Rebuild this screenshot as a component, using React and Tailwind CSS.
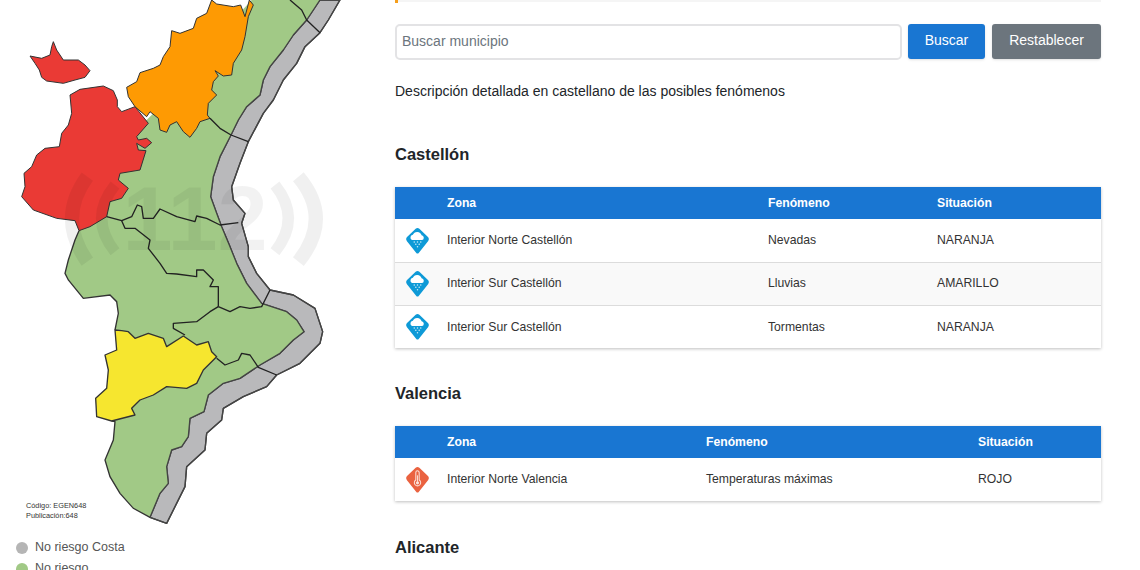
const land = "M755,0 L960,0 L940,30 L920,60 L880,105 L850,150 L810,200 L790,240 L780,285 L740,320 L715,360 L693,405 L660,470 L640,530 L632,590 L650,640 L665,680 L688,735 L710,790 L740,850 L785,910 L860,935 L890,960 L912,995 L880,1020 L840,1060 L780,1095 L720,1135 L670,1150 L625,1185 L612,1235 L570,1255 L565,1310 L545,1340 L515,1350 L500,1400 L505,1450 L480,1480 L450,1552 L400,1525 L360,1480 L330,1430 L315,1380 L340,1320 L345,1265 L290,1250 L287,1195 L320,1165 L325,1110 L315,1065 L350,1050 L345,990 L355,940 L350,905 L330,885 L250,895 L205,840 L195,820 L205,780 L225,720 L237,692 L280,600 L340,500 L390,400 L440,360 L500,300 L600,200 L700,60 Z";
const gray = "M960,0 L1020,0 L985,60 L960,98 L915,140 L890,190 L850,240 L820,300 L790,340 L745,425 L720,490 L695,560 L700,600 L735,640 L725,670 L745,740 L745,770 L770,820 L810,870 L880,885 L945,925 L968,995 L960,1030 L900,1090 L830,1125 L800,1160 L730,1190 L670,1225 L665,1260 L620,1300 L615,1350 L560,1400 L555,1460 L500,1570 L450,1552 L480,1480 L505,1450 L500,1400 L515,1350 L545,1340 L565,1310 L570,1255 L612,1235 L625,1185 L670,1150 L720,1135 L780,1095 L840,1060 L880,1020 L912,995 L890,960 L860,935 L785,910 L740,850 L710,790 L688,735 L665,680 L650,640 L632,590 L640,530 L660,470 L693,405 L715,360 L740,320 L780,285 L790,240 L810,200 L850,150 L880,105 L920,60 L940,30 Z";
const orange = "M635,0 L650,12 L700,20 L722,15 L735,50 L748,0 L760,15 L745,50 L735,110 L725,150 L700,190 L695,225 L670,228 L645,212 L655,228 L640,245 L635,270 L650,285 L625,310 L622,345 L630,355 L600,365 L590,385 L570,412 L550,395 L530,365 L510,375 L500,397 L480,390 L475,355 L450,335 L440,350 L405,320 L385,290 L380,262 L410,245 L420,218 L460,205 L480,195 L490,170 L510,140 L515,92 L540,100 L580,85 L590,55 L620,40 Z";
const island = "M90,168 L125,175 L150,165 L155,140 L160,125 L170,150 L190,180 L235,180 L255,195 L270,212 L255,232 L225,240 L190,250 L140,243 L125,232 L118,210 L105,190 Z";
const red = "M210,285 L240,268 L310,258 L340,272 L352,300 L352,320 L365,335 L405,320 L445,370 L410,410 L415,420 L440,415 L455,428 L435,445 L410,430 L415,450 L438,452 L420,510 L360,520 L355,540 L385,565 L365,595 L330,605 L320,650 L270,680 L237,692 L225,662 L170,655 L100,630 L65,590 L75,560 L72,520 L95,500 L110,465 L135,445 L178,440 L185,400 L205,375 L215,340 Z";
const yellow = "M345,990 L365,992 L385,995 L405,1015 L445,1000 L490,1015 L500,1040 L550,1008 L590,1035 L625,1025 L635,1055 L650,1070 L610,1110 L590,1150 L560,1165 L500,1160 L460,1185 L420,1200 L395,1225 L405,1245 L335,1263 L290,1250 L287,1195 L320,1165 L325,1110 L315,1065 L350,1050 Z";
const lines = [
  "M870,0 L905,30 L920,60 L960,98",
  "M630,355 L660,385 L693,405 L745,425",
  "M320,650 L365,662 L395,650 L412,615 L425,620 L430,655 L460,655 L480,627 L530,650 L585,665 L590,648 L620,655 L660,675 L715,668",
  "M365,662 L375,685 L405,685 L450,720 L445,745 L480,790 L500,820 L530,822 L590,830 L590,810 L610,810 L640,840 L630,860 L655,860 L655,920",
  "M655,920 L630,935 L590,965 L520,970 L520,985 L555,1005",
  "M655,920 L690,935 L720,920 L750,925 L785,920 L810,870",
  "M650,1075 L675,1095 L715,1080 L725,1060 L750,1065 L775,1102 L830,1125",
];

function MapSvg() {
  return (
    <svg viewBox="0 0 1050 1590" className="block shrink-0 w-[350px] h-[530px]">
      <path d={gray} fill="#b9b9bb" stroke="#444" strokeWidth="4" strokeLinejoin="round" />
      <path d={land} fill="#a1c986" stroke="none" />
      <path d="M237,692 L225,720 L205,780 L195,820 L205,840 L250,895 L330,885 L350,905 L355,940 L345,990 M335,1263 L345,1265 L340,1320 L315,1380 L330,1430 L360,1480 L400,1525 L450,1552" fill="none" stroke="#333" strokeWidth="4" />
      <path d={gray} fill="none" stroke="#444" strokeWidth="4" strokeLinejoin="round" />
      <path d={red} fill="#ea3a35" stroke="#333" strokeWidth="3" strokeLinejoin="round" />
      <path d={island} fill="#ea3a35" stroke="#333" strokeWidth="3" strokeLinejoin="round" />
      <path d={orange} fill="#fe9a03" stroke="#333" strokeWidth="3" strokeLinejoin="round" />
      <path d={yellow} fill="#f6e62f" stroke="#333" strokeWidth="4" strokeLinejoin="round" />
      {lines.map((d, i) => (
        <path key={i} d={d} fill="none" stroke="#222" strokeWidth="4" strokeLinejoin="round" />
      ))}
      <g fill="none" stroke="#000" strokeOpacity="0.06">
        <path d="M262,530 Q170,655 262,785" strokeWidth="42" />
        <path d="M345,555 Q265,655 345,755" strokeWidth="34" />
        <path d="M825,555 Q905,655 825,755" strokeWidth="34" />
        <path d="M895,530 Q1000,655 895,785" strokeWidth="42" />
      </g>
      <text x="585" y="750" textAnchor="middle" fontSize="270" fontWeight="700" fill="#000" fillOpacity="0.05" fontFamily="'Liberation Sans', sans-serif">112</text>
      <text x="78" y="1524" fontSize="22" fill="#333" fontFamily="'Liberation Sans', sans-serif">Código: EGEN648</text>
      <text x="78" y="1553" fontSize="22" fill="#333" fontFamily="'Liberation Sans', sans-serif">Publicación:648</text>
    </svg>
  );
}

function Marker({ color, children }) {
  return (
    <svg viewBox="0 0 26 30" className="block w-[25px] h-[28px] ml-[10px] mt-[1px]">
      <path d="M13,1 Q14,1 15,2 L24.5,11 Q26,13 24.5,15 L14.5,27.5 Q13,29.5 11.5,27.5 L1.5,15 Q0,13 1.5,11 L11,2 Q12,1 13,1 Z" fill={color} />
      {children}
    </svg>
  );
}

const Rain = () => (
  <Marker color="#0e9ad7">
    <path d="M7,14 a3,3 0 0 1 1,-5.6 a5,5 0 0 1 9.4,0.4 a2.7,2.7 0 0 1 0.6,5.2 Z" fill="#fff" />
    <g fill="#fff" fillOpacity="0.8">
      <circle cx="9.5" cy="16" r="0.8" />
      <circle cx="13" cy="16" r="0.8" />
      <circle cx="16.5" cy="16" r="0.8" />
      <circle cx="11.2" cy="18.6" r="0.8" />
      <circle cx="14.8" cy="18.6" r="0.8" />
      <circle cx="13" cy="21.2" r="0.8" />
    </g>
  </Marker>
);

const Thermo = () => (
  <Marker color="#ea6240">
    <path d="M11.2,15 V7 a1.8,1.8 0 0 1 3.6,0 V15 a3.4,3.4 0 1 1 -3.6,0 Z" fill="none" stroke="#fbe3da" strokeWidth="1.1" />
    <circle cx="13" cy="18" r="1.7" fill="#fbe3da" />
    <rect x="12.5" y="10" width="1" height="7" fill="#fbe3da" />
  </Marker>
);

const castellon = [
  ["Interior Norte Castellón", "Nevadas", "NARANJA"],
  ["Interior Sur Castellón", "Lluvias", "AMARILLO"],
  ["Interior Sur Castellón", "Tormentas", "NARANJA"],
];

export default function App() {
  return (
    <div className="h-[570px] overflow-hidden bg-white flex font-['Liberation_Sans',Arial,sans-serif] text-[#212529]">
      <div className="w-[395px] shrink-0 flex flex-col">
        <MapSvg />
        <div className="shrink-0 mt-[10px] ml-4 flex flex-col gap-[6px] text-[12.5px] leading-[15px] text-[#555]">
          <div className="flex items-center gap-[7px]">
            <span className="w-3 h-3 rounded-full bg-[#b5b5b5]" />
            <span>No riesgo Costa</span>
          </div>
          <div className="flex items-center gap-[7px]">
            <span className="w-3 h-3 rounded-full bg-[#a1c986]" />
            <span>No riesgo</span>
          </div>
        </div>
      </div>

      <div className="w-[706px] shrink-0">
        <div className="relative h-[2px] bg-[#f5f5f5]">
          <span className="absolute left-0 top-0 w-[3px] h-[3px] bg-[#f59e1b]" />
        </div>

        <div className="mt-[22px] flex items-start">
          <input
            readOnly
            placeholder="Buscar municipio"
            className="w-[507px] h-[36px] pl-[5px] pr-2 pb-[2px] border-2 border-[#e3e3e5] rounded-[5px] text-[14px] text-[#555] placeholder:text-[#6c757d] outline-none"
          />
          <button className="ml-[6px] w-[77px] h-[35px] pb-[2px] rounded-[3px] bg-[#1976d2] text-white text-[14px] shadow-sm">Buscar</button>
          <button className="ml-[7px] w-[109px] h-[35px] pb-[2px] rounded-[3px] bg-[#6c757d] text-white text-[14px] shadow-sm">Restablecer</button>
        </div>

        <p className="mt-[21px] text-[14px] leading-[20px]">Descripción detallada en castellano de las posibles fenómenos</p>

        <h2 className="mt-[42px] text-[16.5px] leading-[22px] font-bold">Castellón</h2>
        <div className="mt-[22px] shadow-[0_1px_3px_rgba(0,0,0,0.25)]">
          <table className="w-full table-fixed border-collapse text-[12.2px]">
            <colgroup>
              <col className="w-[52px]" />
              <col className="w-[321px]" />
              <col className="w-[169px]" />
              <col className="w-[164px]" />
            </colgroup>
            <thead>
              <tr className="h-[32px] bg-[#1976d2] text-white text-left font-bold">
                <th></th>
                <th>Zona</th>
                <th>Fenómeno</th>
                <th>Situación</th>
              </tr>
            </thead>
            <tbody className="text-[#333]">
              {castellon.map((r, i) => (
                <tr key={i} className={`h-[43px] ${i > 0 ? "border-t border-[#dcdcdc]" : ""} ${i === 1 ? "bg-[#f9f9f9]" : "bg-white"}`}>
                  <td><Rain /></td>
                  <td>{r[0]}</td>
                  <td>{r[1]}</td>
                  <td>{r[2]}</td>
                </tr>
              ))}
            </tbody>
          </table>
        </div>

        <h2 className="mt-[34px] text-[16.5px] leading-[22px] font-bold">Valencia</h2>
        <div className="mt-[22px] shadow-[0_1px_3px_rgba(0,0,0,0.25)]">
          <table className="w-full table-fixed border-collapse text-[12.2px]">
            <colgroup>
              <col className="w-[52px]" />
              <col className="w-[259px]" />
              <col className="w-[272px]" />
              <col className="w-[123px]" />
            </colgroup>
            <thead>
              <tr className="h-[32px] bg-[#1976d2] text-white text-left font-bold">
                <th></th>
                <th>Zona</th>
                <th>Fenómeno</th>
                <th>Situación</th>
              </tr>
            </thead>
            <tbody className="text-[#333]">
              <tr className="h-[43px] bg-white">
                <td><Thermo /></td>
                <td>Interior Norte Valencia</td>
                <td>Temperaturas máximas</td>
                <td>ROJO</td>
              </tr>
            </tbody>
          </table>
        </div>

        <h2 className="mt-[35px] text-[16.5px] leading-[22px] font-bold">Alicante</h2>
      </div>
    </div>
  );
}
